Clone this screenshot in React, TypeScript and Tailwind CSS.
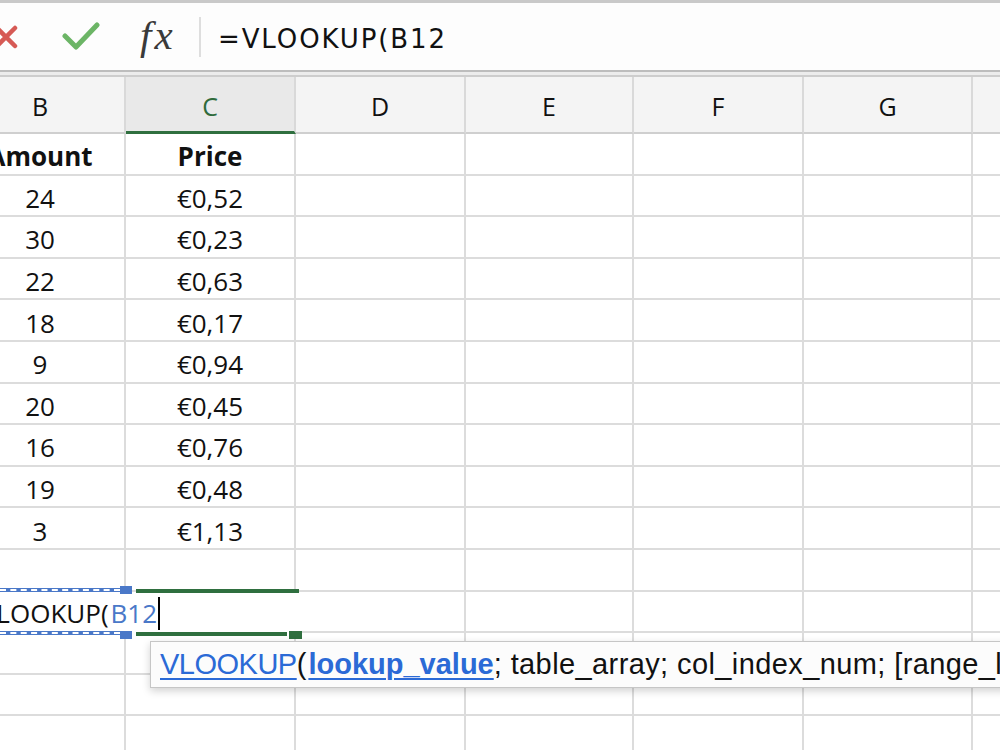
import React from "react";

const colW = ["w-[170px]", "w-[170px]", "w-[170px]", "w-[168px]", "w-[170px]", "w-[169px]", "w-[170px]"];
const letters = ["B", "C", "D", "E", "F", "G", "H"];

const rows: [string, string][] = [
    ["Amount", "Price"],
    ["24", "€0,52"],
    ["30", "€0,23"],
    ["22", "€0,63"],
    ["18", "€0,17"],
    ["9", "€0,94"],
    ["20", "€0,45"],
    ["16", "€0,76"],
    ["19", "€0,48"],
    ["3", "€1,13"],
    ["", ""],
];

const cellFont = { fontFamily: '"Open Sans", "Noto Sans", sans-serif' };

const Cell: React.FC<{ w: string; children?: React.ReactNode; bold?: boolean }> = ({ w, children, bold }) => (
    <div className={`${w} shrink-0 h-full border-r-2 border-b-2 border-[#dcdcdc] flex items-center justify-center pt-[6px] text-[26px] text-[#111] ${bold ? "font-bold" : "font-normal"}`}>
        {children}
    </div>
);

const FormulaBar: React.FC = () => (
    <div className="h-[67px] bg-[#fdfdfd] flex items-center">
        {/* cancel */}
        <svg viewBox="0 0 24 24" className="w-6 h-6 -ml-[6px] shrink-0">
            <path d="M3 3 L21 21 M21 3 L3 21" stroke="#d65a55" strokeWidth="4.5" strokeLinecap="round" fill="none" />
        </svg>
        {/* confirm */}
        <svg viewBox="0 0 38 30" className="w-[38px] h-[30px] ml-[44px] mt-[-2px] shrink-0">
            <path d="M3 15 L14 26 L35 4" stroke="#6cb566" strokeWidth="5" strokeLinecap="round" strokeLinejoin="round" fill="none" />
        </svg>
        <span className="ml-[40px] w-[40px] shrink-0 italic text-[41px] leading-none tracking-[3px] text-[#3a3a3a] -mt-[2px]" style={{ fontFamily: '"Liberation Serif", serif' }}>
            fx
        </span>
        <div className="ml-[19px] w-[2px] h-[40px] bg-[#dedede] shrink-0" />
        <div className="ml-[17px] mt-[6px] text-[26px] tracking-[1.9px] text-[#111]" style={{ fontFamily: '"DejaVu Sans", sans-serif' }}>
            =VLOOKUP(B12
        </div>
    </div>
);

const HeaderRow: React.FC = () => (
    <div className="flex h-[57px]">
        {letters.map((l, i) => (
            <div
                key={l}
                className={`${colW[i]} shrink-0 h-full border-r-2 border-[#d9d9d9] flex items-center justify-center pt-[5px] text-[25px] ${
                    l === "C" ? "bg-[#e9e9e9] text-[#2f6b3b] border-b-[3px] border-b-[#2f6f3f]" : "bg-[#f4f4f4] text-[#111] border-b-2 border-b-[#cfcfcf]"
                }`}
            >
                {l}
            </div>
        ))}
    </div>
);

const EditRow: React.FC = () => (
    <div className="relative flex h-[41.6px]">
        {/* B and C merged while the formula overflows */}
        <div className="w-[340px] shrink-0 h-full bg-white flex items-center pl-[10px] pt-[3px] text-[26px] text-[#111]">
            <span>=VLOOKUP(</span>
            <span className="text-[#4a78c8] ml-[2px]">B12</span>
            <span className="w-[2px] h-[33px] bg-black ml-[1px]" />
        </div>
        {colW.slice(2).map((w, i) => (
            <Cell key={i} w={w} />
        ))}

        {/* reference range B12, marching ants */}
        <div className="absolute left-[44px] top-[-4px] w-[120px] h-[4px] bg-[#4a78c8] flex items-center">
            <div className="w-full border-t-2 border-dashed border-white" />
        </div>
        <div className="absolute left-[44px] top-[39px] w-[120px] h-[4px] bg-[#4a78c8] flex items-center">
            <div className="w-full border-t-2 border-dashed border-white" />
        </div>
        <div className="absolute left-[164px] top-[-6px] w-[12px] h-[8px] bg-[#4a78c8]" />
        <div className="absolute left-[164px] top-[39px] w-[12px] h-[8px] bg-[#4a78c8]" />

        {/* active cell */}
        <div className="absolute left-[180px] top-[-3px] w-[163px] h-[4px] bg-[#2f6f3f]" />
        <div className="absolute left-[180px] top-[40px] w-[151px] h-[4px] bg-[#2f6f3f]" />
        <div className="absolute left-[333px] top-[39px] w-[13px] h-[8px] bg-[#2f6f3f]" />

        {/* argument hint */}
        <div
            className="absolute left-[194px] top-[49px] h-[47px] w-[900px] bg-[#fcfcfc] border border-[#c6c6c6] shadow-[0_3px_8px_rgba(0,0,0,0.18)] flex items-center pl-[9px] pt-[2px] text-[29px] text-[#111] whitespace-nowrap z-10"
            style={{ fontFamily: '"Liberation Sans", Arial, sans-serif' }}
        >
            <span className="text-[#2b6ad6] tracking-[-0.5px] underline decoration-2 underline-offset-[4px]">VLOOKUP</span>
            <span className="mr-[2px]">(</span>
            <span className="text-[#2b6ad6] font-bold underline decoration-2 underline-offset-[4px]">lookup_value</span>
            <span className="tracking-[0.4px]">; table_array; col_index_num; [range_lookup])</span>
        </div>
    </div>
);

export default function App() {
    return (
        <div className="w-[1000px] h-[750px] overflow-hidden bg-white" style={cellFont}>
            <div className="h-[3px] bg-[#c9c9c9]" />
            <FormulaBar />
            <div className="h-[7px] bg-[#ececec] border-t-2 border-t-[#bdbdbd] border-b-2 border-b-[#cdcdcd]" />

            <div className="-ml-[44px]">
                <HeaderRow />
                {rows.map((r, ri) => (
                    <div key={ri} className="flex h-[41.6px]">
                        <Cell w={colW[0]} bold={ri === 0}>{r[0]}</Cell>
                        <Cell w={colW[1]} bold={ri === 0}>{r[1]}</Cell>
                        {colW.slice(2).map((w, i) => (
                            <Cell key={i} w={w} />
                        ))}
                    </div>
                ))}
                <EditRow />
                {[0, 1, 2].map((k) => (
                    <div key={k} className="flex h-[41.6px]">
                        {colW.map((w, i) => (
                            <Cell key={i} w={w} />
                        ))}
                    </div>
                ))}
            </div>
        </div>
    );
}
